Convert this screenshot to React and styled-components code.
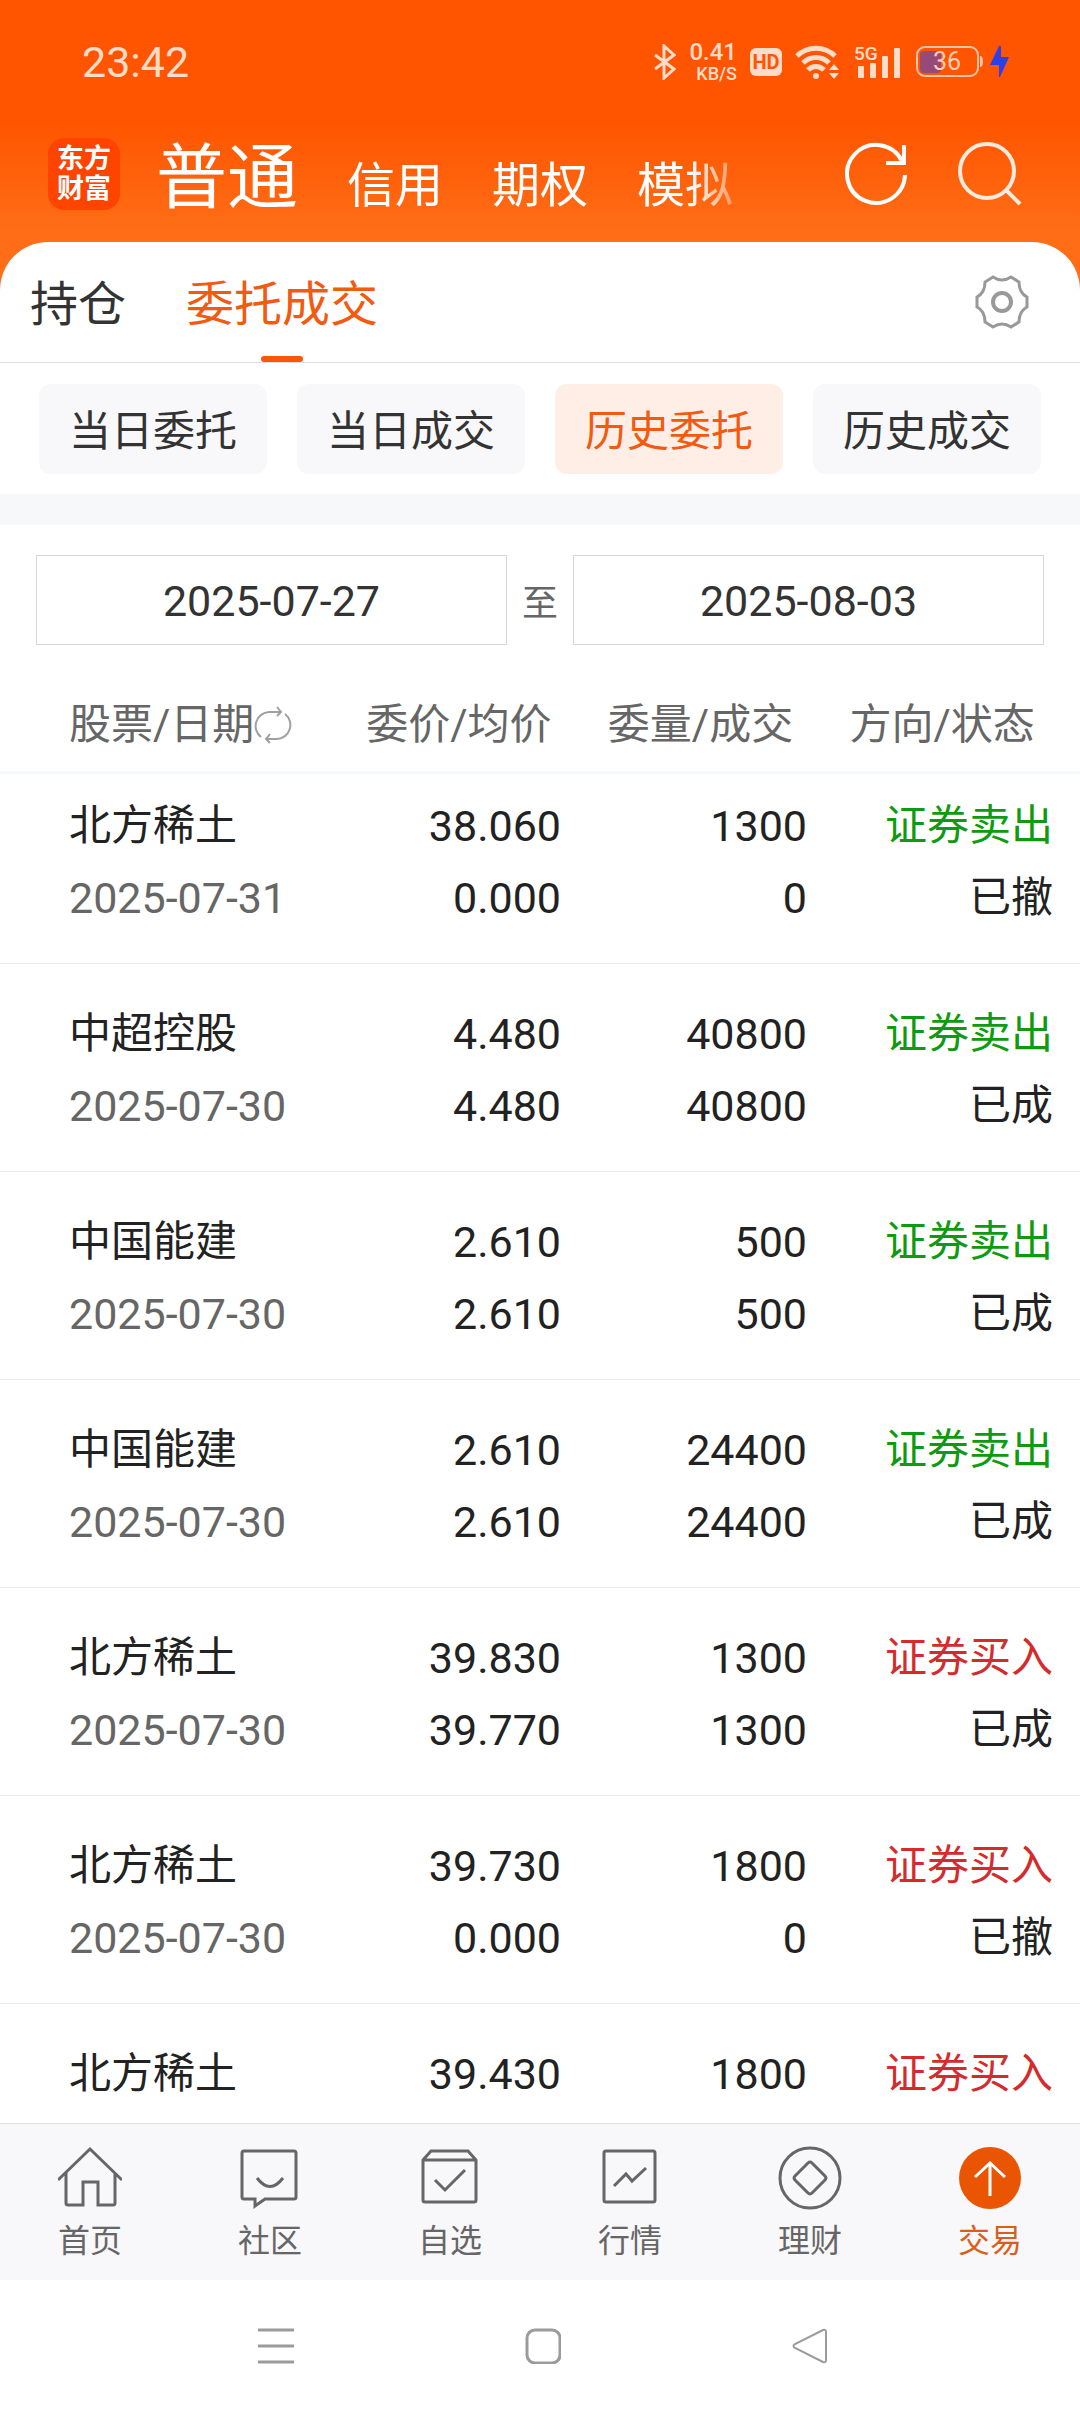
import React from 'react'
import styled, { createGlobalStyle } from 'styled-components'

const GlobalStyle = createGlobalStyle`
  * {
    box-sizing: border-box;
  }
  body {
    margin: 0;
    background: #fff;
    color: #222;
    font-family: Roboto, "Noto Sans CJK SC", sans-serif;
  }
  button, input {
    margin: 0;
    padding: 0;
    border: 0;
    background: none;
    color: inherit;
    font: inherit;
  }
  svg {
    display: block;
    flex: none;
  }
`

const Page = styled.div`
  display: flex;
  flex-direction: column;
  height: 100vh;
  overflow: hidden;
`

const Header = styled.header`
  padding-bottom: 48px;
  background: linear-gradient(#ff5500 122px, #ff6d16 230px);
`

const StatusBar = styled.div`
  display: flex;
  align-items: center;
  justify-content: space-between;
  height: 124px;
  padding: 0 69px 0 82px;
  color: #ffdcc8;
`

const Clock = styled.time`
  font-size: 43px;
`

const StatusIcons = styled.div`
  display: flex;
  align-items: center;
  gap: 13px;
`

const Speed = styled.div`
  display: flex;
  flex-direction: column;
  align-items: flex-end;
  font-size: 18px;
  font-weight: 500;
  line-height: 20px;
`

const SpeedValue = styled.span`
  font-size: 24px;
  line-height: 24px;
`

const HdBadge = styled.span`
  width: 32px;
  border-radius: 6px;
  background: #ffdcc8;
  color: #ff5500;
  font-size: 20px;
  font-weight: 700;
  line-height: 28px;
  text-align: center;
`

const TitleBar = styled.div`
  display: flex;
  align-items: center;
  height: 118px;
  padding: 0 58px 18px 48px;
  color: #fff;
`

const Logo = styled.div`
  width: 72px;
  height: 72px;
  padding: 6px 9px;
  border-radius: 16px;
  background: #ff4400;
  font-size: 27px;
  font-weight: 700;
  line-height: 30px;
`

const Accounts = styled.nav`
  display: flex;
  flex: 1;
  align-items: baseline;
  gap: 49px;
  margin-left: 36px;
  padding-top: 16px;
  overflow: hidden;
  white-space: nowrap;
  mask-image: linear-gradient(to right, #000 535px, transparent 600px);
`

const Account = styled.button`
  font-size: ${({ $active }) => ($active ? 71 : 48)}px;
  line-height: 100px;
`

const IconButton = styled.button`
  display: flex;
  align-items: center;
  justify-content: center;
  margin-left: ${({ $gap }) => $gap || 0}px;
`

const Sheet = styled.main`
  display: flex;
  flex: 1;
  flex-direction: column;
  min-height: 0;
  margin-top: -48px;
  overflow: hidden;
  border-radius: 48px 48px 0 0;
  background: #fff;
`

const Tabs = styled.div`
  display: flex;
  align-items: stretch;
  gap: 60px;
  height: 121px;
  padding: 0 51px 0 30px;
  border-bottom: 1px solid #ddd;
`

const Tab = styled.button`
  position: relative;
  padding-bottom: 4px;
  color: ${({ $active }) => ($active ? '#f25a10' : '#333')};
  font-size: 48px;

  &::after {
    content: '';
    display: ${({ $active }) => ($active ? 'block' : 'none')};
    position: absolute;
    bottom: 0;
    left: 50%;
    width: 42px;
    height: 6px;
    margin-left: -21px;
    border-radius: 3px;
    background: #fc5606;
  }
`

const Settings = styled(IconButton)`
  margin-left: auto;
  color: #999;
`

const Filters = styled.div`
  display: grid;
  grid-template-columns: repeat(4, 1fr);
  gap: 30px;
  padding: 21px 39px 20px;
`

const Filter = styled.button`
  height: 90px;
  padding-bottom: 4px;
  border-radius: 12px;
  background: ${({ $active }) => ($active ? '#ffeee6' : '#f8f8fa')};
  color: ${({ $active }) => ($active ? '#f25a10' : '#333')};
  font-size: 42px;
`

const Divider = styled.div`
  flex: none;
  height: 31px;
  background: #f7f8fa;
`

const DateRange = styled.div`
  display: flex;
  align-items: center;
  gap: 15px;
  padding: 30px 36px 28px;
  color: #666;
  font-size: 36px;
`

const DateInput = styled.input`
  flex: 1;
  min-width: 0;
  height: 90px;
  padding-top: 2px;
  border: 1px solid #d6d6d6;
  color: #333;
  font-size: 43px;
  text-align: center;
`

const Orders = styled.table`
  display: block;
  flex: 1;
  min-height: 0;
  overflow: hidden;
  font-size: 42px;
`

const Head = styled.thead`
  display: block;
  border-bottom: 3px solid #f6f8f9;
`

const HeadRow = styled.tr`
  display: grid;
  grid-template-columns: 338px repeat(3, 1fr);
  height: 98px;
  padding: 6px 17px 0 0;
  line-height: 92px;
`

const HeadCell = styled.th`
  display: flex;
  align-items: center;
  justify-content: center;
  padding: 0;
  color: #666;
  font-weight: 400;

  &:first-child {
    justify-content: flex-start;
    padding-left: 69px;
  }
`

const Body = styled.tbody`
  display: block;
`

const Row = styled.tr`
  display: grid;
  grid-template-columns: 315px repeat(3, 1fr);
  padding: 34px 27px 29px 0;
  border-bottom: 1px solid #eaeaea;

  &:first-child {
    padding-top: 16px;
  }
`

const Cell = styled.td`
  padding: 0;
  line-height: 72px;
  text-align: right;

  &:first-child {
    padding-left: 69px;
    text-align: left;
    white-space: nowrap;
  }
`

const tones = {
  muted: '#666',
  sell: '#109a10',
  buy: '#d42c2c',
}

const Line = styled.div`
  height: 72px;
  color: ${({ $tone }) => tones[$tone] || '#222'};
`

const Figure = styled(Line)`
  font-size: 43px;
`

const BottomNav = styled.nav`
  display: grid;
  grid-template-columns: repeat(6, 1fr);
  flex: none;
  height: 157px;
  border-top: 1px solid #e2e2e4;
  background: #f8f8fa;
`

const NavLink = styled.a`
  display: flex;
  flex-direction: column;
  align-items: center;
  padding-top: 22px;
  color: ${({ $active }) => ($active ? '#d9601c' : '#666')};
  font-size: 32px;
  line-height: 62px;
  text-decoration: none;
`

const SystemBar = styled.div`
  display: grid;
  grid-template-columns: repeat(3, 1fr);
  flex: none;
  height: 132px;
  padding: 0 136px 0 142px;
  color: #9b9b9b;
`

const Svg = ({ w, h = w, sw = 3, children }) => (
  <svg
    width={w}
    height={h}
    viewBox={`0 0 ${w} ${h}`}
    fill="none"
    stroke="currentColor"
    strokeWidth={sw}
    aria-hidden="true"
  >
    {children}
  </svg>
)

const BluetoothIcon = () => (
  <Svg w={22} h={36}>
    <path d="M1 11l19 14-10 9V2l10 9L1 25" />
  </Svg>
)

const WifiIcon = () => (
  <Svg w={46} h={36} sw={5}>
    <path d="M2 12a27 27 0 0 1 38 0M8 19a18 18 0 0 1 26 0M13 26a11 11 0 0 1 16 0" />
    <circle cx="21" cy="32" r="3" fill="currentColor" stroke="none" />
    <path d="M34 26l5-6 5 6zM34 29l5 6 5-6z" fill="currentColor" stroke="none" />
  </Svg>
)

const SignalIcon = () => (
  <svg width="48" height="40" viewBox="0 -4 48 40" fill="currentColor" aria-hidden="true">
    <text x="0" y="14" fontSize="19" fontWeight="500">5G</text>
    <rect x="4" y="20" width="6" height="12" rx="1" />
    <rect x="16" y="17" width="6" height="15" rx="1" />
    <rect x="28" y="10" width="6" height="22" rx="1" />
    <rect x="40" y="2" width="6" height="30" rx="1" />
  </svg>
)

const BatteryIcon = () => (
  <svg width="96" height="36" viewBox="0 0 96 36" aria-hidden="true">
    <rect x="5" y="7" width="21" height="22" rx="4" fill="#964a78" />
    <rect x="2" y="3" width="61" height="29" rx="8" fill="none" stroke="#ffc4a4" strokeWidth="2" />
    <path d="M65 12q3 0 3 5.500t-3 5.500z" fill="#ffc4a4" />
    <text x="32" y="26" fontSize="25" textAnchor="middle" fill="#ffd0b8">36</text>
    <path d="M84 2l-9 19h9v12h1l9-20h-8V2z" fill="#2f3fe8" />
  </svg>
)

const RefreshIcon = () => (
  <Svg w={64} sw={4}>
    <path d="M60 33A29 29 0 1 1 57 19" />
    <path d="M59 3v18H41" />
  </Svg>
)

const SearchIcon = () => (
  <Svg w={64} sw={4}>
    <g stroke="#ffeadd">
      <circle cx="29" cy="29" r="27" />
      <path d="M48 48l14 14" />
    </g>
  </Svg>
)

const GearIcon = () => (
  <Svg w={54}>
    <path d="M18 2q9 6 18 0l8 5q0 11 8 15v10q-8 4-8 15l-8 5q-9-6-18 0l-8-5q0-11-8-15V22q8-4 8-15z" />
    <circle cx="27" cy="27" r="9" strokeWidth="4" />
  </Svg>
)

const SwapIcon = () => (
  <Svg w={38} sw={2}>
    <path
      stroke="#a0a0a0"
      d="M7 31A14 14 0 0 1 15 6h12M23 1l4 5-4 4M31 8A14 14 0 0 1 23 33H12M16 28l-4 5 4 4"
    />
  </Svg>
)

const HomeIcon = () => (
  <Svg w={64}>
    <path d="M0 34L32 3l32 31M8 27v30q0 2 2 2h15V36h15v23h15q2 0 2-2V27" />
  </Svg>
)

const CommunityIcon = () => (
  <Svg w={64}>
    <path d="M6 5h50q2 0 2 2v44q0 2-2 2H27l-10 7v-7H6q-2 0-2-2V7q0-2 2-2zM19 32q13 17 26 0" />
  </Svg>
)

const WatchlistIcon = () => (
  <Svg w={64}>
    <path d="M5 14l8-9h37l8 9v40q0 2-2 2H7q-2 0-2-2zM5 14h53M17 34l10 10 20-20" />
  </Svg>
)

const MarketIcon = () => (
  <Svg w={64}>
    <rect x="6" y="5" width="51" height="51" rx="2" />
    <path d="M16 40l12-12 6 7 14-13" />
  </Svg>
)

const WealthIcon = () => (
  <Svg w={64}>
    <circle cx="32" cy="32" r="30" />
    <path d="M30 17q2-2 4 0l13 13q2 2 0 4L34 47q-2 2-4 0L17 34q-2-2 0-4z" />
  </Svg>
)

const TradeIcon = () => (
  <Svg w={64}>
    <circle cx="32" cy="32" r="31" fill="#ea5504" stroke="none" />
    <path d="M32 50V17M17 31l15-14 15 14" stroke="#fff" />
  </Svg>
)

const orders = [
  { name: '北方稀土', date: '2025-07-31', price: '38.060', avg: '0.000', qty: '1300', done: '0', side: 'sell', state: '已撤' },
  { name: '中超控股', date: '2025-07-30', price: '4.480', avg: '4.480', qty: '40800', done: '40800', side: 'sell', state: '已成' },
  { name: '中国能建', date: '2025-07-30', price: '2.610', avg: '2.610', qty: '500', done: '500', side: 'sell', state: '已成' },
  { name: '中国能建', date: '2025-07-30', price: '2.610', avg: '2.610', qty: '24400', done: '24400', side: 'sell', state: '已成' },
  { name: '北方稀土', date: '2025-07-30', price: '39.830', avg: '39.770', qty: '1300', done: '1300', side: 'buy', state: '已成' },
  { name: '北方稀土', date: '2025-07-30', price: '39.730', avg: '0.000', qty: '1800', done: '0', side: 'buy', state: '已撤' },
  { name: '北方稀土', price: '39.430', qty: '1800', side: 'buy' },
]

const sides = { sell: '证券卖出', buy: '证券买入' }

const navItems = [
  { label: '首页', Icon: HomeIcon },
  { label: '社区', Icon: CommunityIcon },
  { label: '自选', Icon: WatchlistIcon },
  { label: '行情', Icon: MarketIcon },
  { label: '理财', Icon: WealthIcon },
  { label: '交易', Icon: TradeIcon },
]

const App = () => {
  return (
    <Page>
      <GlobalStyle />
      <Header>
        <StatusBar>
          <Clock>23:42</Clock>
          <StatusIcons>
            <BluetoothIcon />
            <Speed>
              <SpeedValue>0.41</SpeedValue>
              KB/S
            </Speed>
            <HdBadge>HD</HdBadge>
            <WifiIcon />
            <SignalIcon />
            <BatteryIcon />
          </StatusIcons>
        </StatusBar>
        <TitleBar>
          <Logo>东方财富</Logo>
          <Accounts>
            <Account $active>普通</Account>
            <Account>信用</Account>
            <Account>期权</Account>
            <Account>模拟</Account>
          </Accounts>
          <IconButton aria-label="刷新"><RefreshIcon /></IconButton>
          <IconButton $gap={49} aria-label="搜索"><SearchIcon /></IconButton>
        </TitleBar>
      </Header>

      <Sheet>
        <Tabs>
          <Tab>持仓</Tab>
          <Tab $active>委托成交</Tab>
          <Settings aria-label="设置"><GearIcon /></Settings>
        </Tabs>
        <Filters>
          <Filter>当日委托</Filter>
          <Filter>当日成交</Filter>
          <Filter $active>历史委托</Filter>
          <Filter>历史成交</Filter>
        </Filters>
        <Divider />
        <DateRange>
          <DateInput aria-label="开始日期" defaultValue="2025-07-27" />
          至
          <DateInput aria-label="结束日期" defaultValue="2025-08-03" />
        </DateRange>
        <Orders>
          <Head>
            <HeadRow>
              <HeadCell>股票/日期<SwapIcon /></HeadCell>
              <HeadCell>委价/均价</HeadCell>
              <HeadCell>委量/成交</HeadCell>
              <HeadCell>方向/状态</HeadCell>
            </HeadRow>
          </Head>
          <Body>
            {orders.map((o, i) => (
              <Row key={i}>
                <Cell>
                  <Line>{o.name}</Line>
                  <Figure $tone="muted">{o.date}</Figure>
                </Cell>
                <Cell>
                  <Figure>{o.price}</Figure>
                  <Figure>{o.avg}</Figure>
                </Cell>
                <Cell>
                  <Figure>{o.qty}</Figure>
                  <Figure>{o.done}</Figure>
                </Cell>
                <Cell>
                  <Line $tone={o.side}>{sides[o.side]}</Line>
                  <Line>{o.state}</Line>
                </Cell>
              </Row>
            ))}
          </Body>
        </Orders>
      </Sheet>

      <BottomNav>
        {navItems.map(({ label, Icon }) => (
          <NavLink key={label} href="#" $active={label === '交易'}>
            <Icon />
            {label}
          </NavLink>
        ))}
      </BottomNav>
      <SystemBar>
        <IconButton aria-label="最近任务">
          <Svg w={36}><path d="M0 2h36M0 18h36M0 34h36" /></Svg>
        </IconButton>
        <IconButton aria-label="主屏幕">
          <Svg w={36}><rect x="2" y="2" width="33" height="33" rx="8" /></Svg>
        </IconButton>
        <IconButton aria-label="返回">
          <Svg w={36}><path d="M31 2q3-1 3 2v28q0 3-3 2L3 20q-3-2 0-4z" strokeWidth="2" /></Svg>
        </IconButton>
      </SystemBar>
    </Page>
  )
}

export default App
